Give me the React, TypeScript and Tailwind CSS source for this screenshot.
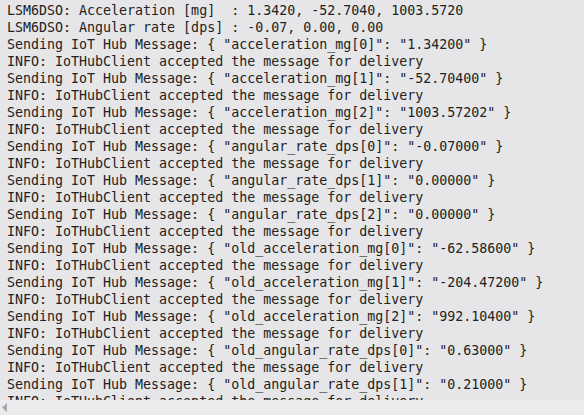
const lines = [
  "LSM6DSO: Acceleration [mg]  : 1.3420, -52.7040, 1003.5720",
  "LSM6DSO: Angular rate [dps] : -0.07, 0.00, 0.00",
  'Sending IoT Hub Message: { "acceleration_mg[0]": "1.34200" }',
  "INFO: IoTHubClient accepted the message for delivery",
  'Sending IoT Hub Message: { "acceleration_mg[1]": "-52.70400" }',
  "INFO: IoTHubClient accepted the message for delivery",
  'Sending IoT Hub Message: { "acceleration_mg[2]": "1003.57202" }',
  "INFO: IoTHubClient accepted the message for delivery",
  'Sending IoT Hub Message: { "angular_rate_dps[0]": "-0.07000" }',
  "INFO: IoTHubClient accepted the message for delivery",
  'Sending IoT Hub Message: { "angular_rate_dps[1]": "0.00000" }',
  "INFO: IoTHubClient accepted the message for delivery",
  'Sending IoT Hub Message: { "angular_rate_dps[2]": "0.00000" }',
  "INFO: IoTHubClient accepted the message for delivery",
  'Sending IoT Hub Message: { "old_acceleration_mg[0]": "-62.58600" }',
  "INFO: IoTHubClient accepted the message for delivery",
  'Sending IoT Hub Message: { "old_acceleration_mg[1]": "-204.47200" }',
  "INFO: IoTHubClient accepted the message for delivery",
  'Sending IoT Hub Message: { "old_acceleration_mg[2]": "992.10400" }',
  "INFO: IoTHubClient accepted the message for delivery",
  'Sending IoT Hub Message: { "old_angular_rate_dps[0]": "0.63000" }',
  "INFO: IoTHubClient accepted the message for delivery",
  'Sending IoT Hub Message: { "old_angular_rate_dps[1]": "0.21000" }',
  "INFO: IoTHubClient accepted the message for delivery",
];

export default function App() {
  return (
    <div className="flex h-[415px] w-[584px] flex-col overflow-hidden bg-[#e6e6e8]">
      <div className="h-[400px] overflow-hidden pl-[7px] pt-[2px] font-['DejaVu_Sans_Mono',monospace] text-[13.3px] leading-[17px] text-[#222]">
        {lines.map((line, i) => (
          <div key={i} className="whitespace-pre">
            {line}
          </div>
        ))}
      </div>
      <div className="flex h-[15px] items-center bg-[#ececee] pl-[2px]">
        <svg width="5" height="9" viewBox="0 0 5 9">
          <path d="M5 0 L0 4.5 L5 9 Z" fill="#a8a8ac" />
        </svg>
      </div>
    </div>
  );
}
